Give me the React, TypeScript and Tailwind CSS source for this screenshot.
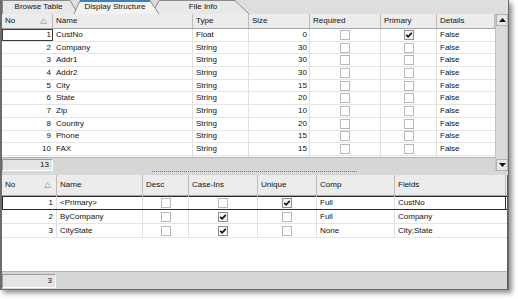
import React from 'react';

const topW = ['w-[51px]', 'w-[140px]', 'w-[56px]', 'w-[61px]', 'w-[71px]', 'w-[56px]', 'w-[58px]'];
const topHead = ['No', 'Name', 'Type', 'Size', 'Required', 'Primary', 'Details'];

// the 11th row is only a sliver at the bottom edge, so it carries no text
const fields: [number, string, string, string, boolean, boolean][] = [
  [1, 'CustNo', 'Float', '0', false, true],
  [2, 'Company', 'String', '30', false, false],
  [3, 'Addr1', 'String', '30', false, false],
  [4, 'Addr2', 'String', '30', false, false],
  [5, 'City', 'String', '15', false, false],
  [6, 'State', 'String', '20', false, false],
  [7, 'Zip', 'String', '10', false, false],
  [8, 'Country', 'String', '20', false, false],
  [9, 'Phone', 'String', '15', false, false],
  [10, 'FAX', 'String', '15', false, false],
  [11, '', '', '', false, false],
];

const botW = ['w-[55px]', 'w-[86px]', 'w-[46px]', 'w-[69px]', 'w-[59px]', 'w-[78px]', 'w-[111px]'];
const botHead = ['No', 'Name', 'Desc', 'Case-Ins', 'Unique', 'Comp', 'Fields'];

const indexes: [number, string, boolean, boolean, boolean, string, string][] = [
  [1, '<Primary>', false, false, true, 'Full', 'CustNo'],
  [2, 'ByCompany', false, true, false, 'Full', 'Company'],
  [3, 'CityState', false, true, false, 'None', 'City;State'],
];

function Check({ on }: { on?: boolean }) {
  return (
    <span
      className={`inline-flex h-[10px] w-[10px] shrink-0 items-center justify-center border ${
        on ? 'border-[#8e8e8e] bg-[#f6f6f6]' : 'border-[#b8b8b8] bg-white'
      }`}
    >
      {on && (
        <svg width="8" height="8" viewBox="0 0 8 8">
          <path d="M1.2 3.9 L3.1 5.8 L6.8 1.9" fill="none" stroke="#151515" strokeWidth="1.7" />
        </svg>
      )}
    </span>
  );
}

function SortArrow() {
  return (
    <svg width="7" height="6" viewBox="0 0 7 6">
      <path d="M0.5 5.5 L3.5 0.5 L6.5 5.5 Z" fill="none" stroke="#b0b0b0" strokeWidth="1" />
    </svg>
  );
}

function Arrow({ down }: { down?: boolean }) {
  return (
    <svg width="7" height="4" viewBox="0 0 7 4">
      <path d={down ? 'M0 0 L7 0 L3.5 4 Z' : 'M0 4 L7 4 L3.5 0 Z'} fill="#111" />
    </svg>
  );
}

function Head({ widths, labels, h }: { widths: string[]; labels: string[]; h: string }) {
  return (
    <div className={`flex ${h} shrink-0 border-b border-[#a4a4a4] bg-[#ececec]`}>
      {labels.map((l, i) => (
        <div
          key={l}
          className={`${widths[i]} flex shrink-0 items-center justify-between border-r border-[#bcbcbc] pl-[3px] pr-[5px]`}
        >
          <span>{l}</span>
          {i === 0 && <SortArrow />}
        </div>
      ))}
    </div>
  );
}

function Tabs() {
  return (
    <div className="relative h-[14px] shrink-0 bg-[#dedede]">
      <svg className="absolute left-0 top-0" width="260" height="14" viewBox="0 0 260 14">
        <path d="M150 14 L157 0.5 L233 0.5 L247 14" fill="#e8e8e8" stroke="#8a8a8a" />
        <path d="M0.5 14 L0.5 0.5 L68 0.5 L76 14" fill="#e8e8e8" stroke="#8a8a8a" />
        <path d="M72 14 L78 0.5 L148 0.5 L157 14" fill="#f3f3f3" stroke="#8a8a8a" />
        <path d="M78 1 L148 1" stroke="#3d7fc0" strokeWidth="2" />
      </svg>
      <div className="relative flex h-full items-center">
        <span className="w-[73px] text-center">Browse Table</span>
        <span className="w-[80px] text-center">Display Structure</span>
        <span className="w-[96px] text-center">File Info</span>
      </div>
    </div>
  );
}

export default function App() {
  return (
    <div className="h-[299px] w-[518px] bg-white font-['Liberation_Sans',Arial,sans-serif] text-[8px] leading-none text-[#111]">
      <div className="flex h-[290px] w-[509px] flex-col border-b border-l-2 border-r border-[#6c6c6c] bg-[#d7d7d7] shadow-[3px_3px_5px_rgba(0,0,0,0.45)]">
        <Tabs />

        {/* fields grid */}
        <div className="flex h-[157px] shrink-0">
          <div className="flex w-[493px] flex-col">
            <Head widths={topW} labels={topHead} h="h-[15px]" />
            <div className="flex-1 overflow-hidden bg-white">
              {fields.map(([no, name, type, size, req, prim]) => (
                <div key={no} className="flex h-[12.7px] border-b border-[#e4e4e4]">
                  <div
                    className={`${topW[0]} flex shrink-0 items-center justify-end pr-[2px] ${
                      no === 1 ? 'shadow-[inset_0_0_0_1px_#3a3a3a]' : ''
                    }`}
                  >
                    {name ? no : ''}
                  </div>
                  <div className={`${topW[1]} flex shrink-0 items-center border-r border-[#e0e0e0] pl-[3px]`}>{name}</div>
                  <div className={`${topW[2]} flex shrink-0 items-center border-r border-[#e0e0e0] pl-[3px]`}>{type}</div>
                  <div className={`${topW[3]} flex shrink-0 items-center justify-end border-r border-[#e0e0e0] pr-[2px]`}>
                    {size}
                  </div>
                  <div className={`${topW[4]} flex shrink-0 items-center justify-center border-r border-[#e0e0e0]`}>
                    <Check on={req} />
                  </div>
                  <div className={`${topW[5]} flex shrink-0 items-center justify-center border-r border-[#e0e0e0]`}>
                    <Check on={prim} />
                  </div>
                  <div className={`${topW[6]} flex shrink-0 items-center pl-[3px]`}>{name ? 'False' : ''}</div>
                </div>
              ))}
            </div>
            <div className="flex h-[14px] shrink-0 items-center border-t border-[#b4b4b4] bg-[#d6d6d6]">
              <div className="flex h-[12px] w-[51px] items-center justify-end border border-b-white border-l-[#9c9c9c] border-r-white border-t-[#9c9c9c] bg-[#e4e4e4] pr-[3px]">
                13
              </div>
            </div>
          </div>
          <div className="flex w-[13px] flex-col border-l border-[#c4c4c4] bg-[#dadada]">
            <div className="flex h-[12px] items-center justify-center border border-[#b0b0b0] bg-[#e6e6e6]">
              <Arrow />
            </div>
            <div className="flex-1 border-r border-[#bdbdbd]" />
            <div className="flex h-[12px] items-center justify-center border border-[#b0b0b0] bg-[#e6e6e6]">
              <Arrow down />
            </div>
          </div>
        </div>

        {/* splitter */}
        <div className="flex h-[4px] shrink-0 items-start pl-[150px]">
          <div className="h-[1px] w-[205px] border-t border-dotted border-[#7a7a7a]" />
        </div>

        {/* index grid */}
        <div className="flex flex-1 flex-col border-r border-[#5a5a5a]">
          <Head widths={botW} labels={botHead} h="h-[21px]" />
          <div className="flex-1 bg-white">
            {indexes.map(([no, name, desc, ci, uniq, comp, flds]) => (
              <div
                key={no}
                className={`flex h-[14px] border-b ${
                  no === 1 ? 'border-[#2a2a2a] shadow-[inset_0_1px_0_#2a2a2a,inset_1px_0_0_#2a2a2a]' : 'border-[#e4e4e4]'
                }`}
              >
                <div className={`${botW[0]} flex shrink-0 items-center justify-end border-r border-[#e0e0e0] pr-[3px]`}>{no}</div>
                <div className={`${botW[1]} flex shrink-0 items-center border-r border-[#e0e0e0] pl-[3px]`}>{name}</div>
                <div className={`${botW[2]} flex shrink-0 items-center justify-center border-r border-[#e0e0e0]`}>
                  <Check on={desc} />
                </div>
                <div className={`${botW[3]} flex shrink-0 items-center justify-center border-r border-[#e0e0e0]`}>
                  <Check on={ci} />
                </div>
                <div className={`${botW[4]} flex shrink-0 items-center justify-center border-r border-[#e0e0e0]`}>
                  <Check on={uniq} />
                </div>
                <div className={`${botW[5]} flex shrink-0 items-center border-r border-[#e0e0e0] pl-[3px]`}>{comp}</div>
                <div
                  className={`${botW[6]} flex shrink-0 items-center pl-[3px] ${
                    no === 1 ? 'border-r border-[#2a2a2a]' : ''
                  }`}
                >
                  {flds}
                </div>
              </div>
            ))}
          </div>
          <div className="flex h-[18px] shrink-0 items-center border-t border-[#b4b4b4] bg-[#d6d6d6]">
            <div className="flex h-[14px] w-[54px] items-center justify-end border border-b-white border-l-[#9c9c9c] border-r-white border-t-[#9c9c9c] bg-[#e4e4e4] pr-[3px]">
              3
            </div>
          </div>
        </div>
      </div>
    </div>
  );
}
